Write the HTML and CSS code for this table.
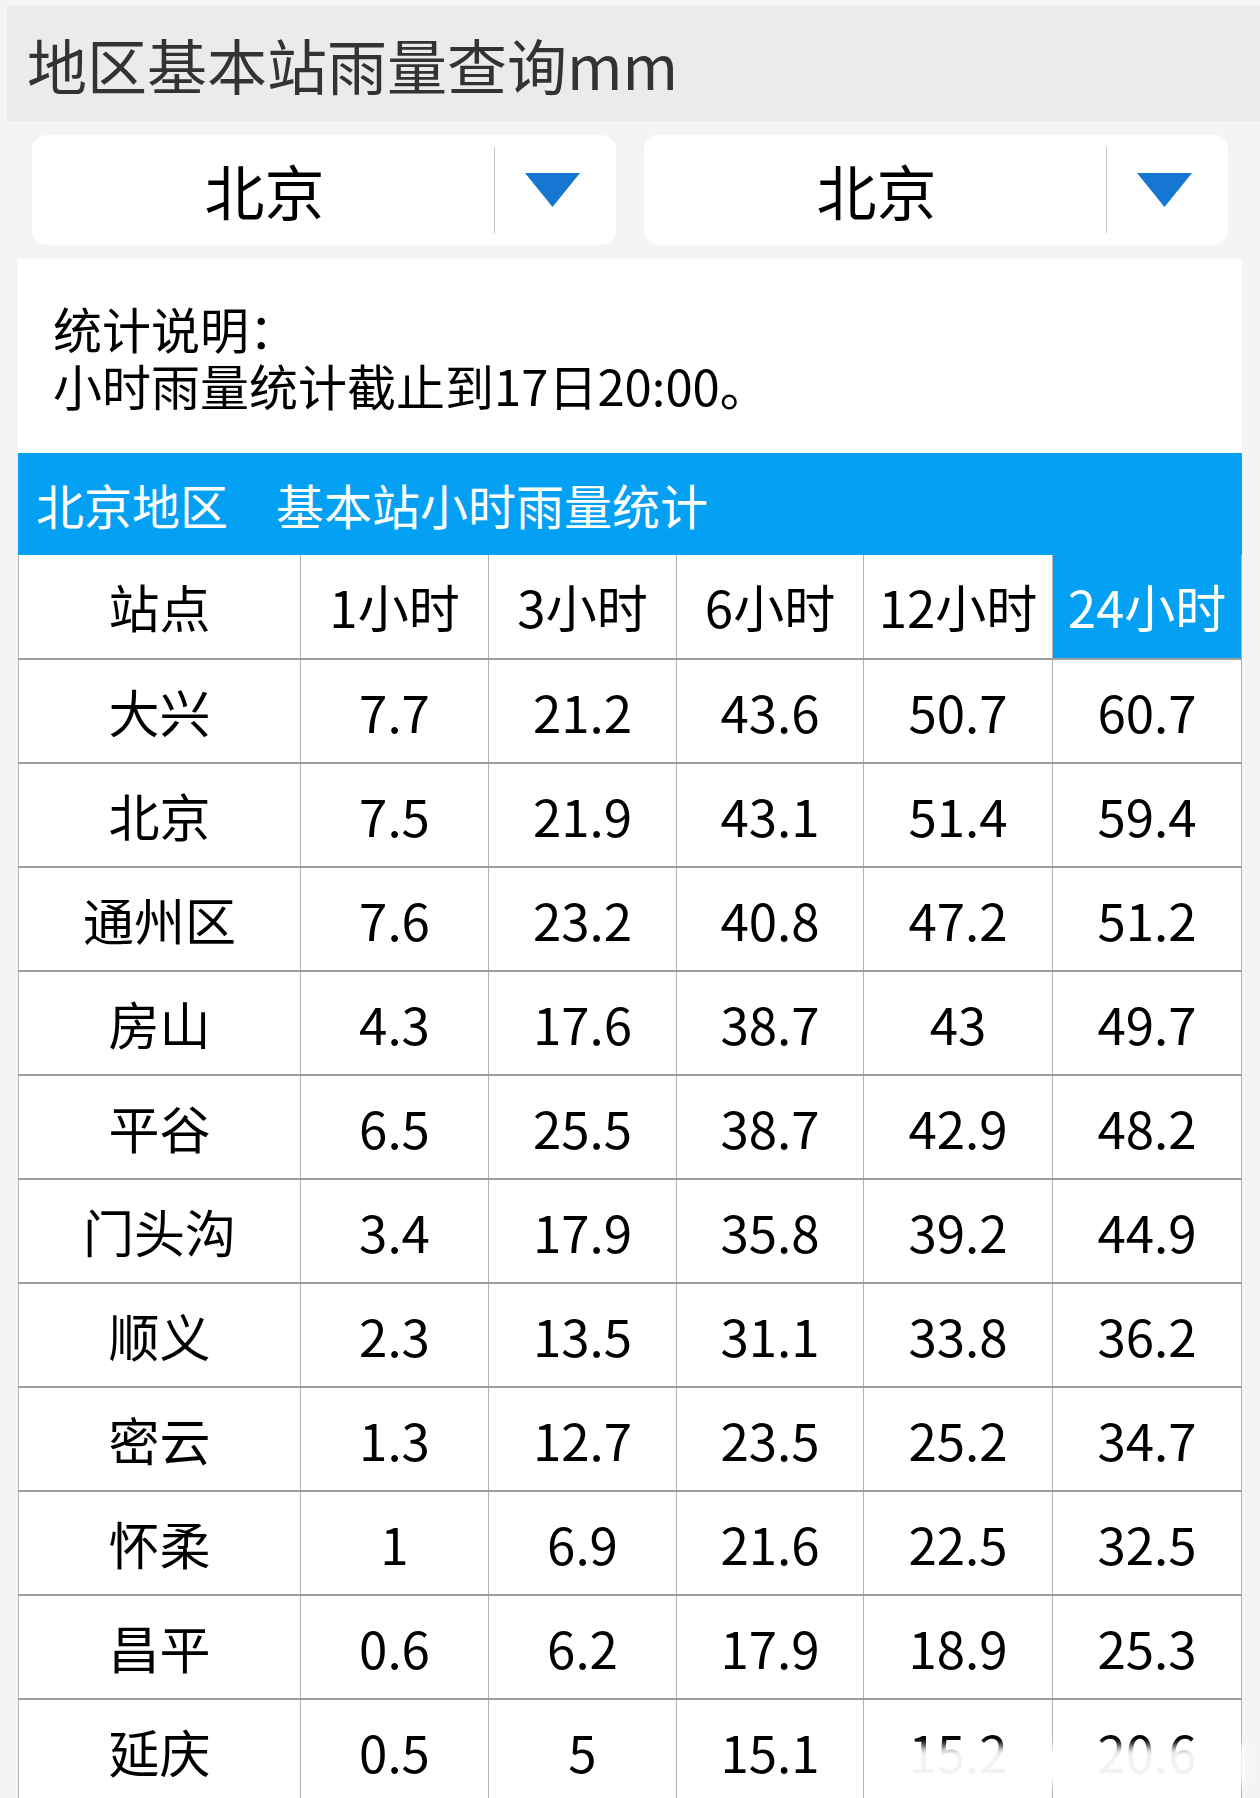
FILE: index.html
```html
<!DOCTYPE html>
<html lang="zh-CN">
<head>
<meta charset="utf-8">
<title>地区基本站雨量查询</title>
<link rel="stylesheet" href="styles.css">
</head>
<body>
<div class="page">
  <header class="title-bar">地区基本站雨量查询mm</header>
  <div class="selects">
    <div class="select">
      <span class="select-label">北京</span>
      <span class="select-arrow"><svg class="tri" width="55" height="34" viewBox="0 0 55 34"><polygon points="0,0 55,0 27.5,34"/></svg></span>
    </div>
    <div class="select">
      <span class="select-label">北京</span>
      <span class="select-arrow"><svg class="tri" width="55" height="34" viewBox="0 0 55 34"><polygon points="0,0 55,0 27.5,34"/></svg></span>
    </div>
  </div>
  <section class="info">
    <p class="info-line">统计说明：</p>
    <p class="info-line">小时雨量统计截止到17日20:00。</p>
  </section>
  <div class="region-bar">北京地区　基本站小时雨量统计</div>
  <table class="rain">
    <colgroup>
      <col class="c-name"><col class="c-num"><col class="c-num"><col class="c-num3"><col class="c-num2"><col class="c-num2">
    </colgroup>
    <thead>
      <tr><th>站点</th><th>1小时</th><th>3小时</th><th>6小时</th><th>12小时</th><th class="hl">24小时</th></tr>
    </thead>
    <tbody>
      <tr><td>大兴</td><td>7.7</td><td>21.2</td><td>43.6</td><td>50.7</td><td>60.7</td></tr>
      <tr><td>北京</td><td>7.5</td><td>21.9</td><td>43.1</td><td>51.4</td><td>59.4</td></tr>
      <tr><td>通州区</td><td>7.6</td><td>23.2</td><td>40.8</td><td>47.2</td><td>51.2</td></tr>
      <tr><td>房山</td><td>4.3</td><td>17.6</td><td>38.7</td><td>43</td><td>49.7</td></tr>
      <tr><td>平谷</td><td>6.5</td><td>25.5</td><td>38.7</td><td>42.9</td><td>48.2</td></tr>
      <tr><td>门头沟</td><td>3.4</td><td>17.9</td><td>35.8</td><td>39.2</td><td>44.9</td></tr>
      <tr><td>顺义</td><td>2.3</td><td>13.5</td><td>31.1</td><td>33.8</td><td>36.2</td></tr>
      <tr><td>密云</td><td>1.3</td><td>12.7</td><td>23.5</td><td>25.2</td><td>34.7</td></tr>
      <tr><td>怀柔</td><td>1</td><td>6.9</td><td>21.6</td><td>22.5</td><td>32.5</td></tr>
      <tr><td>昌平</td><td>0.6</td><td>6.2</td><td>17.9</td><td>18.9</td><td>25.3</td></tr>
      <tr><td>延庆</td><td>0.5</td><td>5</td><td>15.1</td><td>15.2</td><td>20.6</td></tr>
    </tbody>
  </table>
  <div class="watermark"></div>
</div>
</body>
</html>
```

FILE: styles.css
```css
html, body {
  margin: 0;
  padding: 0;
}

body {
  background: #f4f4f4;
  font-family: "Noto Sans CJK SC", "Noto Sans", sans-serif;
  width: 1260px;
  height: 1798px;
  overflow: hidden;
  color: #000;
}

.page {
  position: relative;
  padding-top: 6px;
}

.title-bar {
  margin-left: 7px;
  height: 115px;
  background: #ebebeb;
  color: #333;
  font-size: 60px;
  line-height: 115px;
  padding-left: 20px;
}

.selects {
  display: flex;
  gap: 28px;
  padding: 14px 32px 0;
}

.select {
  flex: 1;
  height: 110px;
  background: #fff;
  border-radius: 15px;
  display: flex;
  align-items: center;
}

.select-label {
  flex: 1;
  text-align: center;
  font-size: 60px;
  line-height: 110px;
  color: #000;
  padding-left: 3px;
}

.select-arrow {
  width: 121px;
  height: 86px;
  border-left: 1px solid #c6c6c6;
  display: flex;
  align-items: center;
  justify-content: center;
}

.tri {
  fill: #1677d3;
  margin-left: -6px;
}

.info {
  margin: 14px 18px 0;
  background: #fff;
  padding: 40px 35px;
  font-size: 49px;
  line-height: 57px;
}

.info-line {
  margin: 0;
  height: 57px;
}

.region-bar {
  margin: 0 18px;
  height: 102px;
  background: #03a0f3;
  color: #fff;
  font-size: 48px;
  line-height: 102px;
  padding-left: 18px;
}

.rain {
  margin-left: 18px;
  width: 1224px;
  border-collapse: collapse;
  table-layout: fixed;
  font-size: 51px;
}

.c-name { width: 282px; }
.c-num { width: 188px; }
.c-num3 { width: 187px; }
.c-num2 { width: 189px; }

.rain th,
.rain td {
  height: 102px;
  padding: 0;
  text-align: center;
  font-weight: normal;
  background: #fff;
  border-left: 1px solid #b4b4b4;
  border-right: 1px solid #b4b4b4;
  border-bottom: 2px solid #9e9e9e;
  line-height: 1;
}

.rain th {
  height: 103px;
}

.rain th.hl {
  background: #03a0f3;
  color: #fff;
}

.watermark {
  position: absolute;
  left: 890px;
  top: 1746px;
  width: 355px;
  height: 38px;
  background: rgba(255, 255, 255, 0.95);
  filter: blur(4px);
}
```
